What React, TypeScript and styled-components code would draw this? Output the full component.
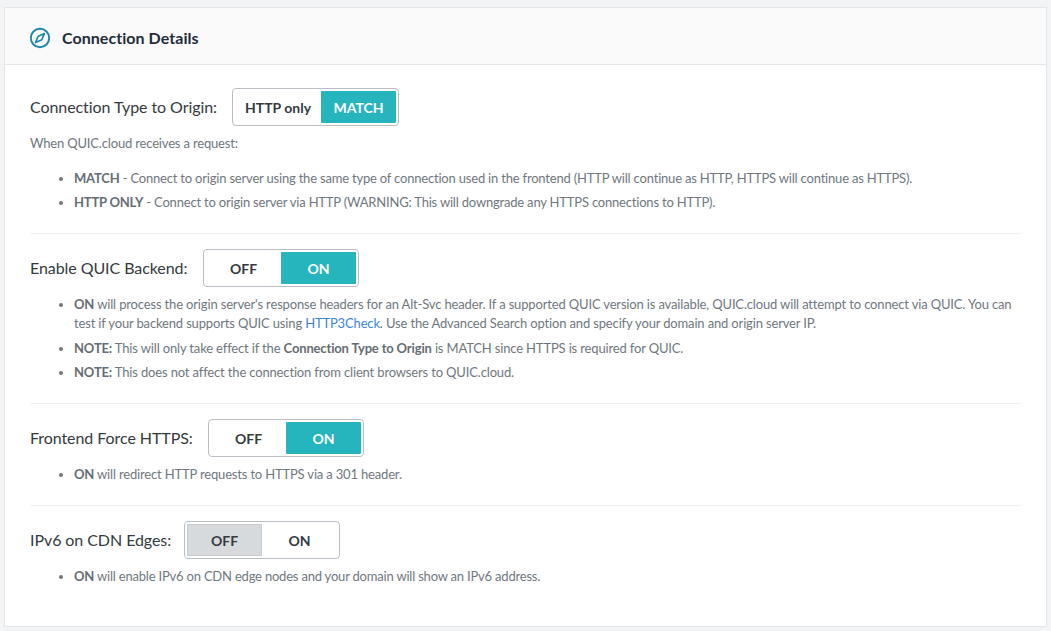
import React from 'react'
import styled, { createGlobalStyle } from 'styled-components'

const GlobalStyle = createGlobalStyle`
  html, body {
    margin: 0;
    padding: 0;
    background: #f3f4f6;
    font-family: Lato, "Open Sans", sans-serif;
  }
`

const Toggle: React.FC<{
  left: string
  right: string
  active: 'left' | 'right'
  narrow?: boolean
}> = ({ left, right, active, narrow }) => (
  <ToggleGroup>
    <ToggleOption $fit={narrow} $on={active === 'left'} $tone="grey">
      {left}
    </ToggleOption>
    <ToggleOption $on={active === 'right'} $tone="teal">
      {right}
    </ToggleOption>
  </ToggleGroup>
)

const CompassIcon = () => (
  <svg width="22" height="22" viewBox="0 0 22 22" fill="none">
    <circle cx="11" cy="11" r="9.2" stroke="#1a86a8" strokeWidth="1.9" />
    <path
      d="M15.4 6.6 L12.8 12.8 L6.6 15.4 L9.2 9.2 Z"
      stroke="#1a86a8"
      strokeWidth="1.6"
      strokeLinejoin="round"
    />
  </svg>
)

const App: React.FC = () => {
  return (
    <>
      <GlobalStyle />
      <Page>
        <Card>
          <CardHeader>
            <CompassIcon />
            <CardTitle>Connection Details</CardTitle>
          </CardHeader>
          <CardBody>
            <Section>
              <OptionRow>
                <OptionLabel $width={202}>Connection Type to Origin:</OptionLabel>
                <Toggle left="HTTP only" right="MATCH" active="right" narrow />
              </OptionRow>
              <Intro>When QUIC.cloud receives a request:</Intro>
              <Notes $first $tracking={-0.195}>
                <li>
                  <b>MATCH</b> - Connect to origin server using the same type of connection used in the
                  frontend (HTTP will continue as HTTP, HTTPS will continue as HTTPS).
                </li>
                <li>
                  <b>HTTP ONLY</b> - Connect to origin server via HTTP (WARNING: This will downgrade any
                  HTTPS connections to HTTP).
                </li>
              </Notes>
            </Section>
            <Section>
              <OptionRow>
                <OptionLabel $width={173}>Enable QUIC Backend:</OptionLabel>
                <Toggle left="OFF" right="ON" active="right" />
              </OptionRow>
              <Notes $tracking={-0.155}>
                <li>
                  <b>ON</b> will process the origin server's response headers for an Alt-Svc header. If a
                  supported QUIC version is available, QUIC.cloud will attempt to connect via QUIC. You can
                  test if your backend supports QUIC using <NoteLink href="#">HTTP3Check</NoteLink>. Use the
                  Advanced Search option and specify your domain and origin server IP.
                </li>
                <li>
                  <b>NOTE:</b> This will only take effect if the <b>Connection Type to Origin</b> is MATCH
                  since HTTPS is required for QUIC.
                </li>
                <li>
                  <b>NOTE:</b> This does not affect the connection from client browsers to QUIC.cloud.
                </li>
              </Notes>
            </Section>
            <Section>
              <OptionRow>
                <OptionLabel $width={178}>Frontend Force HTTPS:</OptionLabel>
                <Toggle left="OFF" right="ON" active="right" />
              </OptionRow>
              <Notes $tracking={-0.17}>
                <li>
                  <b>ON</b> will redirect HTTP requests to HTTPS via a 301 header.
                </li>
              </Notes>
            </Section>
            <Section>
              <OptionRow>
                <OptionLabel $width={154}>IPv6 on CDN Edges:</OptionLabel>
                <Toggle left="OFF" right="ON" active="left" />
              </OptionRow>
              <Notes $tracking={-0.2}>
                <li>
                  <b>ON</b> will enable IPv6 on CDN edge nodes and your domain will show an IPv6 address.
                </li>
              </Notes>
            </Section>
          </CardBody>
        </Card>
      </Page>
    </>
  )
}

const Page = styled.div`
  height: 631px;
  overflow: hidden;
  padding: 7px 4px 4px 4px;
  box-sizing: border-box;
`
const Card = styled.div`
  height: 620px;
  box-sizing: border-box;
  background: #fff;
  border: 1px solid #e4e6e9;
`
const CardHeader = styled.div`
  height: 57px;
  box-sizing: border-box;
  display: flex;
  align-items: center;
  gap: 11px;
  padding: 3px 0 0 24px;
  background: #fafafb;
  border-bottom: 1px solid #e4e6e9;
`
const CardTitle = styled.h3`
  margin: 0;
  font-size: 16px;
  letter-spacing: 0.05px;
  font-weight: 700;
  color: #1f2d3a;
`
const CardBody = styled.div`
  padding: 23px 25px 0;
`
const Section = styled.section`
  padding-bottom: 21px;
  margin-bottom: 15px;
  border-bottom: 1px solid #f0f1f3;
  &:last-child {
    border-bottom: none;
  }
`
const OptionRow = styled.div`
  display: flex;
  align-items: center;
`
const OptionLabel = styled.span<{ $width: number }>`
  width: ${(p) => p.$width}px;
  padding-bottom: 2px;
  font-size: 16px;
  letter-spacing: -0.07px;
  color: #343a40;
`
const ToggleGroup = styled.div`
  display: inline-flex;
  height: 38px;
  box-sizing: border-box;
  padding: 2px;
  background: #fff;
  border: 1px solid #b9bec4;
  border-radius: 4px;
`
const ToggleOption = styled.span<{ $fit?: boolean; $on: boolean; $tone: 'grey' | 'teal' }>`
  display: flex;
  align-items: center;
  justify-content: center;
  box-sizing: border-box;
  padding: ${(p) => (p.$fit ? '0 10px' : '0')};
  width: ${(p) => (p.$fit ? 'auto' : '75px')};
  font-size: 14px;
  font-weight: 700;
  border-radius: 1px;
  color: ${(p) => (p.$on && p.$tone === 'teal' ? '#fff' : '#343a40')};
  background: ${(p) => (!p.$on ? 'transparent' : p.$tone === 'teal' ? '#26b5bc' : '#d6dadd')};
  box-shadow: ${(p) => (p.$on && p.$tone === 'grey' ? 'inset 0 0 0 1px #c6cbcf' : 'none')};
`
const Intro = styled.p`
  margin: 8px 0 0;
  font-size: 13px;
  line-height: 18px;
  letter-spacing: -0.17px;
  color: #6f777e;
`
const Notes = styled.ul<{ $first?: boolean; $tracking: number }>`
  margin: ${(p) => (p.$first ? '17px' : '8px')} 0 0;
  padding: 0 0 0 44px;
  font-size: 13px;
  line-height: 19px;
  letter-spacing: ${(p) => p.$tracking}px;
  color: #6f777e;
  li + li {
    margin-top: 5.4px;
  }
  b {
    font-weight: 700;
    color: #656d74;
  }
`
const NoteLink = styled.a`
  color: #3d84d6;
  text-decoration: none;
`

export default App
